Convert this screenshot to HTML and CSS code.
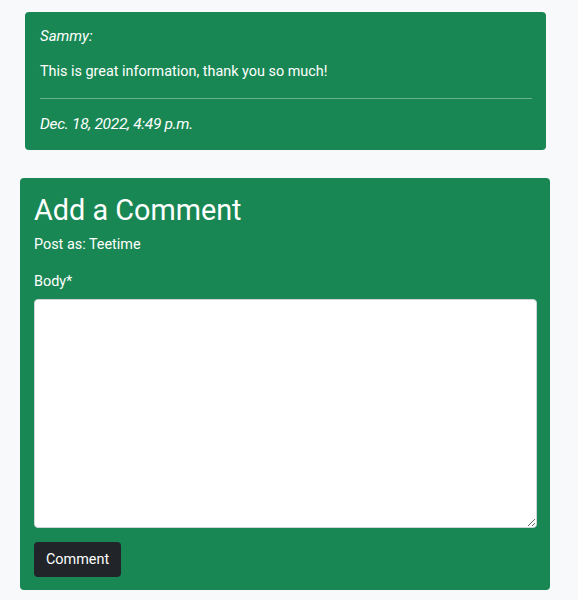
FILE: index.html
```html
<!DOCTYPE html>
<html>
<head>
<meta charset="utf-8">
<link rel="stylesheet" href="styles.css">
</head>
<body>
<div class="page">
  <div class="comment-card">
    <p class="author">Sammy:</p>
    <p class="body">This is great information, thank you so much!</p>
    <hr class="divider">
    <p class="date">Dec. 18, 2022, 4:49 p.m.</p>
  </div>
  <div class="form-card">
    <h2 class="title">Add a Comment</h2>
    <p class="post-as">Post as: Teetime</p>
    <label class="label" for="body">Body*</label>
    <textarea id="body" class="textarea"></textarea>
    <button class="btn">Comment</button>
  </div>
</div>
</body>
</html>
```
FILE: styles.css
```css
html, body {
  margin: 0;
  padding: 0;
  background: #f8f9fa;
  font-family: Roboto, "Liberation Sans", sans-serif;
  color: #fff;
}
.page {
  display: flex;
  flex-direction: column;
  padding: 12px 28px 10px 20px;
  gap: 28px;
}
.comment-card {
  background: #198754;
  border-radius: 4px;
  margin: 0 4px 0 5px;
  padding: 14px 14px 16px 15px;
}
.comment-card p { margin: 0; }
.author {
  font-style: italic;
  font-size: 15px;
  line-height: 20px;
}
.body {
  font-size: 14.4px;
  line-height: 20px;
  margin-top: 16px !important;
}
.divider {
  border: 0;
  border-top: 1px solid rgba(255,255,255,0.35);
  margin: 16px 0 15px;
}
.date {
  font-style: italic;
  font-weight: 400;
  font-size: 15.5px;
  letter-spacing: -0.3px;
  line-height: 20px;
}
.form-card {
  background: #198754;
  border-radius: 4px;
  padding: 14px 13px 13px 14px;
  display: flex;
  flex-direction: column;
  align-items: flex-start;
}
.title {
  margin: 0;
  font-weight: 400;
  font-size: 28.8px;
  line-height: 36px;
}
.post-as {
  margin: 7px 0 0;
  font-size: 14.4px;
  line-height: 20px;
}
.label {
  margin-top: 17px;
  font-size: 14.4px;
  line-height: 20px;
}
.textarea {
  margin-top: 7px;
  width: 100%;
  box-sizing: border-box;
  height: 229px;
  border: 1px solid #ced4da;
  border-radius: 4px;
  background: #fff;
}
.btn {
  margin-top: 14px;
  background: #212529;
  color: #fff;
  border: 0;
  border-radius: 4px;
  font-family: Roboto, "Liberation Sans", sans-serif;
  font-size: 14.4px;
  padding: 0 12px;
  height: 35px;
}
```
